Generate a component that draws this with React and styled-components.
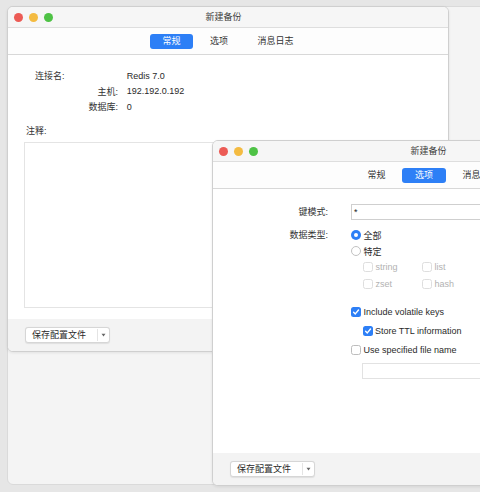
import React from 'react';
import styled, { createGlobalStyle } from 'styled-components';

const GlobalStyle = createGlobalStyle`
  html, body { margin: 0; padding: 0; background: #e6e6e6; }
  body {
    font-family: "Liberation Sans", "Noto Sans CJK SC", sans-serif;
    font-size: 9px;
    color: #2c2c2c;
  }
  * { box-sizing: border-box; }
`;

const Desktop = styled.div`
  position: relative;
  width: 480px;
  height: 492px;
  overflow: hidden;
  background: #e6e6e6;
`;

const Backdrop = styled.div`
  position: absolute;
  left: 7px;
  top: 6px;
  width: 490px;
  height: 479px;
  background: #f4f4f4;
  border: 1px solid #dadada;
  border-radius: 6px;
`;

const Window = styled.div`
  position: absolute;
  left: ${p => p.$x}px;
  top: ${p => p.$y}px;
  width: 442px;
  height: 346px;
  background: #fff;
  border: 1px solid #cfcfcf;
  border-radius: 6px;
  overflow: hidden;
  display: flex;
  flex-direction: column;
  box-shadow: 0 1px 3px rgba(0, 0, 0, 0.08);
`;

const TitleBar = styled.div`
  flex: none;
  height: 21px;
  display: grid;
  grid-template-columns: 1fr auto 1fr;
  align-items: center;
  padding: 0 15px 0 6px;
  background: #f6f6f6;
  border-bottom: 1px solid #dedede;
`;

const Lights = styled.div`
  display: flex;
  gap: 6px;
`;

const Light = styled.span`
  width: 9px;
  height: 9px;
  border-radius: 50%;
  background: ${p => p.$c};
`;

const Title = styled.div`
  color: #3a3a3a;
  line-height: 12px;
`;

const TabBar = styled.div`
  flex: none;
  height: 27px;
  display: flex;
  justify-content: center;
  align-items: center;
  gap: 4.5px;
  background: #fdfdfd;
  border-bottom: 1px solid #d8d8d8;
`;

const Tab = styled.div`
  height: 15px;
  line-height: 15px;
  padding: 0 12.5px;
  border-radius: 3px;
  background: ${p => (p.$active ? '#2d7ff6' : 'transparent')};
  color: ${p => (p.$active ? '#fff' : '#333')};
`;

const Content = styled.div`
  flex: 1;
  min-height: 0;
  display: flex;
  flex-direction: column;
  padding: ${p => p.$pad};
`;

const InfoGrid = styled.div`
  display: grid;
  grid-template-columns: 83px 1fr;
  grid-auto-rows: 15.5px;
  column-gap: 8.7px;
  align-items: center;
  padding-left: 11px;
`;

const InfoLabel = styled.div`
  justify-self: ${p => (p.$start ? 'start' : 'end')};
  color: #333;
`;

const InfoValue = styled.div`
  color: #2a2a2a;
`;

const NoteLabel = styled.div`
  margin: 10px 0 0 2px;
  height: 12px;
  line-height: 12px;
  color: #333;
`;

const NoteArea = styled.textarea`
  flex: 1;
  margin-top: 5px;
  border: 1px solid #e4e4e4;
  background: #fff;
  resize: none;
  outline: none;
  font: inherit;
`;

const Footer = styled.div`
  flex: none;
  height: 32px;
  display: flex;
  align-items: center;
  padding-left: 17px;
  background: #f3f3f3;
`;

const SplitButton = styled.div`
  display: flex;
  height: 16px;
  background: #fff;
  border: 1px solid #d6d6d6;
  border-radius: 3px;
  box-shadow: 0 0.5px 1px rgba(0, 0, 0, 0.08);
`;

const ButtonMain = styled.div`
  padding: 0 11px 0 6px;
  line-height: 14px;
  color: #2a2a2a;
`;

const ButtonArrow = styled.div`
  width: 12px;
  display: flex;
  align-items: center;
  justify-content: center;
  border-left: 1px solid #e4e4e4;
  margin: 1px 0;
`;

const FormGrid = styled.div`
  display: grid;
  grid-template-columns: 115px 1fr;
  column-gap: 23px;
  align-items: start;
`;

const FieldLabel = styled.div`
  justify-self: end;
  height: 16px;
  line-height: 16px;
  margin-top: ${p => p.$top || 0}px;
  color: #333;
`;

const TextInput = styled.div`
  height: 16px;
  line-height: 14px;
  padding-left: 2px;
  border: 1px solid ${p => (p.$dim ? '#e2e2e2' : '#cfcfcf')};
  background: #fff;
  margin: ${p => p.$margin || '0'};
  color: #222;
`;

const ControlStack = styled.div`
  display: flex;
  flex-direction: column;
  margin-top: 7px;
`;

const OptionRow = styled.label`
  height: 16px;
  display: flex;
  align-items: center;
  gap: 2.5px;
  margin-left: ${p => p.$indent || 0}px;
  margin-top: ${p => p.$top || 0}px;
  color: ${p => (p.$disabled ? '#b2b2b2' : '#2a2a2a')};
`;

const CheckGrid = styled.div`
  display: grid;
  grid-template-columns: repeat(3, 59px);
  grid-auto-rows: 16.5px;
  padding-left: 12px;
`;

const RadioDot = styled.span`
  flex: none;
  width: 10px;
  height: 10px;
  border-radius: 50%;
  display: flex;
  align-items: center;
  justify-content: center;
  background: ${p => (p.$on ? '#2d7ff6' : '#fff')};
  border: ${p => (p.$on ? 'none' : '1px solid #c2c2c2')};
  &::after {
    content: '';
    display: ${p => (p.$on ? 'block' : 'none')};
    width: 4px;
    height: 4px;
    border-radius: 50%;
    background: #fff;
  }
`;

const Box = styled.span`
  flex: none;
  width: 10px;
  height: 10px;
  border-radius: 2.5px;
  display: flex;
  align-items: center;
  justify-content: center;
  background: ${p => (p.$on ? '#2d7ff6' : '#fff')};
  border: ${p => (p.$on ? 'none' : `1px solid ${p.$disabled ? '#dedede' : '#bdbdbd'}`)};
`;

const Radio = ({ on, children }) => (
  <OptionRow>
    <RadioDot $on={on} />
    {children}
  </OptionRow>
);

const Check = ({ on, disabled, indent, top, children }) => (
  <OptionRow $disabled={disabled} $indent={indent} $top={top}>
    <Box $on={on} $disabled={disabled}>
      {on && (
        <svg width="8" height="8" viewBox="0 0 8 8">
          <path d="M1.6 4.2 L3.3 5.9 L6.5 2" fill="none" stroke="#fff" strokeWidth="1.4" strokeLinecap="round" strokeLinejoin="round" />
        </svg>
      )}
    </Box>
    {children}
  </OptionRow>
);

const WindowChrome = ({ active }) => (
  <>
    <TitleBar>
      <Lights>
        <Light $c="#ec5b55" />
        <Light $c="#f4bb41" />
        <Light $c="#4ec245" />
      </Lights>
      <Title>新建备份</Title>
    </TitleBar>
    <TabBar>
      {['常规', '选项', '消息日志'].map(t => (
        <Tab key={t} $active={t === active}>{t}</Tab>
      ))}
    </TabBar>
  </>
);

const SaveButton = () => (
  <SplitButton>
    <ButtonMain>保存配置文件</ButtonMain>
    <ButtonArrow>
      <svg width="5" height="4" viewBox="0 0 5 4">
        <path d="M0.5 0.8 L4.5 0.8 L2.5 3.4 Z" fill="#666" />
      </svg>
    </ButtonArrow>
  </SplitButton>
);

const types = ['string', 'list', 'set', 'zset', 'hash', 'stream'];

export default function App() {
  return (
    <Desktop>
      <GlobalStyle />
      <Backdrop />
      <Window $x={7} $y={6}>
        <WindowChrome active="常规" />
        <Content $pad="13px 16px 11px">
          <InfoGrid>
            <InfoLabel $start>连接名:</InfoLabel>
            <InfoValue>Redis 7.0</InfoValue>
            <InfoLabel>主机:</InfoLabel>
            <InfoValue>192.192.0.192</InfoValue>
            <InfoLabel>数据库:</InfoLabel>
            <InfoValue>0</InfoValue>
          </InfoGrid>
          <NoteLabel>注释:</NoteLabel>
          <NoteArea />
        </Content>
        <Footer>
          <SaveButton />
        </Footer>
      </Window>
      <Window $x={212} $y={140}>
        <WindowChrome active="选项" />
        <Content $pad="15px 16px 0 0">
          <FormGrid>
            <FieldLabel>键模式:</FieldLabel>
            <TextInput>*</TextInput>
            <FieldLabel $top={7}>数据类型:</FieldLabel>
            <ControlStack>
              <Radio on>全部</Radio>
              <Radio>特定</Radio>
              <CheckGrid>
                {types.map(t => (
                  <Check key={t} disabled>{t}</Check>
                ))}
              </CheckGrid>
              <Check on top={12}>Include volatile keys</Check>
              <Check on indent={11.5} top={3}>Store TTL information</Check>
              <Check top={3}>Use specified file name</Check>
              <TextInput $dim $margin="4.5px 0 0 11px" />
            </ControlStack>
          </FormGrid>
        </Content>
        <Footer>
          <SaveButton />
        </Footer>
      </Window>
    </Desktop>
  );
}
